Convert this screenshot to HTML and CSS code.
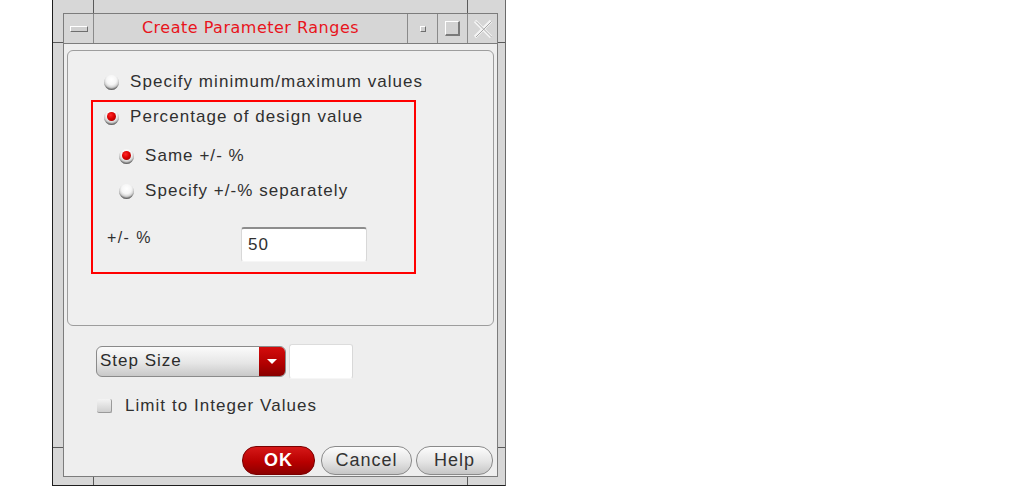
FILE: index.html
```html
<!DOCTYPE html>
<html>
<head>
<meta charset="utf-8">
<link rel="stylesheet" href="styles.css">
</head>
<body>
<div class="window">
  <span class="tick tick-top-l"></span>
  <span class="tick tick-top-r"></span>
  <span class="tick tick-bot-l"></span>
  <span class="tick tick-bot-r"></span>
  <span class="tick tick-side-lt"></span>
  <span class="tick tick-side-rt"></span>
  <span class="tick tick-side-lb"></span>
  <span class="tick tick-side-rb"></span>
  <div class="inner">
    <div class="titlebar">
      <div class="tb-btn tb-menu"><span class="menu-bar"></span></div>
      <div class="title">Create Parameter Ranges</div>
      <div class="tb-btn tb-min"><span class="min-dot"></span></div>
      <div class="tb-btn tb-max"><span class="max-box"></span></div>
      <div class="tb-btn tb-close">
        <svg width="22" height="20" viewBox="0 0 22 20">
          <path d="M3 2 L19 18 M19 2 L3 18" stroke="#f4f4f4" stroke-width="3.2" fill="none"/>
          <path d="M4 2.5 L19.5 18 M19.5 2.5 L4 18" stroke="#a8a8a8" stroke-width="1" fill="none"/>
        </svg>
      </div>
    </div>
    <div class="content">
      <div class="group">
        <div class="opt opt-top"><span class="radio"></span><span class="lbl">Specify minimum/maximum values</span></div>
        <div class="redbox">
          <div class="opt opt-pct"><span class="radio on"></span><span class="lbl">Percentage of design value</span></div>
          <div class="opt opt-sub opt-same"><span class="radio on"></span><span class="lbl">Same +/- %</span></div>
          <div class="opt opt-sub opt-sep"><span class="radio"></span><span class="lbl">Specify +/-% separately</span></div>
          <div class="pct-row">
            <span class="pct-label">+/- %</span>
            <div class="field field-pct">50</div>
          </div>
        </div>
      </div>
      <div class="step-row">
        <div class="combo">
          <span class="combo-text">Step Size</span>
          <span class="combo-arrow"></span>
        </div>
        <div class="field field-step"></div>
      </div>
      <div class="check-row">
        <span class="checkbox"></span><span class="lbl">Limit to Integer Values</span>
      </div>
      <div class="buttons">
        <div class="btn btn-ok">OK</div>
        <div class="btn btn-cancel">Cancel</div>
        <div class="btn btn-help">Help</div>
      </div>
    </div>
  </div>
</div>
</body>
</html>
```
FILE: styles.css
```css
html, body {
  margin: 0;
  padding: 0;
  background: #ffffff;
}
body {
  font-family: "Liberation Sans", Arial, sans-serif;
  color: #2e2e2e;
}
.window {
  position: relative;
  margin-left: 52px;
  width: 454px;
  height: 486px;
  box-sizing: border-box;
  border-left: 1px solid #1e1e1e;
  border-right: 1px solid #6a6a6a;
  border-bottom: 1px solid #1e1e1e;
  background: #d7d7d7;
  padding: 13px 7px 8px 10px;
}
.tick {
  position: absolute;
  background: #5a5a5a;
}
.tick-top-l { left: 40px; top: 0; width: 1px; height: 13px; }
.tick-top-r { left: 414px; top: 0; width: 1px; height: 13px; }
.tick-bot-l { left: 40px; bottom: 0; width: 1px; height: 8px; }
.tick-bot-r { left: 414px; bottom: 0; width: 1px; height: 8px; }
.tick-side-lt { left: 0; top: 42px; width: 10px; height: 1px; }
.tick-side-rt { right: 0; top: 42px; width: 7px; height: 1px; }
.tick-side-lb { left: 0; top: 447px; width: 10px; height: 1px; }
.tick-side-rb { right: 0; top: 447px; width: 7px; height: 1px; }

.inner {
  height: 100%;
  display: flex;
  flex-direction: column;
  border: 1px solid #7c7c7c;
  box-sizing: border-box;
}
.titlebar {
  height: 29px;
  display: flex;
  border-bottom: 1px solid #7c7c7c;
  background: #d6d6d6;
  flex: none;
}
.tb-btn {
  width: 29px;
  display: flex;
  align-items: center;
  justify-content: center;
}
.tb-menu { border-right: 1px solid #8a8a8a; }
.tb-min, .tb-max, .tb-close { border-left: 1px solid #8a8a8a; }
.menu-bar {
  width: 16px;
  height: 4px;
  border-top: 1px solid #ffffff;
  border-left: 1px solid #ffffff;
  border-right: 1px solid #6e6e6e;
  border-bottom: 1px solid #6e6e6e;
  background: #d0d0d0;
}
.min-dot {
  width: 4px;
  height: 4px;
  border-top: 1px solid #ffffff;
  border-left: 1px solid #ffffff;
  border-right: 1px solid #6e6e6e;
  border-bottom: 1px solid #6e6e6e;
  background: #cfcfcf;
}
.max-box {
  width: 12px;
  height: 12px;
  border-top: 1px solid #ffffff;
  border-left: 1px solid #ffffff;
  border-right: 2px solid #7a7a7a;
  border-bottom: 2px solid #7a7a7a;
  background: #d2d2d2;
}
.title {
  flex: 1;
  text-align: center;
  color: #e8141c;
  font-family: "DejaVu Sans", sans-serif;
  font-size: 16px;
  line-height: 28px;
  letter-spacing: 0.5px;
}

.content {
  flex: 1;
  background: #eeeeee;
  padding: 6px 0 0 3px;
  display: flex;
  flex-direction: column;
}
.group {
  width: 427px;
  height: 276px;
  box-sizing: border-box;
  border: 1px solid #9d9d9d;
  border-radius: 6px;
  padding: 20px 0 0 23px;
  background: #efefef;
}
.opt {
  display: flex;
  align-items: center;
  height: 22px;
  font-size: 17px;
  letter-spacing: 1.05px;
  color: #303030;
}
.opt-top { padding-left: 13px; }
.lbl { margin-left: 11px; }
.radio {
  width: 15px;
  height: 15px;
  border-radius: 50%;
  flex: none;
  background: radial-gradient(circle at 50% 32%, #ffffff 0, #f6f6f6 38%, #d4d4d4 62%, #8c8c8c 85%, #5a5a5a 100%);
  box-shadow: inset 0 -2px 2px -1px #555555;
  position: relative;
}
.radio.on::after {
  content: "";
  position: absolute;
  left: 3px;
  top: 2px;
  width: 9px;
  height: 9px;
  border-radius: 50%;
  background: radial-gradient(circle at 40% 35%, #ff2a2a 0, #dc0000 45%, #8a0000 100%);
}
.redbox {
  margin-top: 7px;
  width: 325px;
  height: 174px;
  box-sizing: border-box;
  border: 2px solid #ff0000;
  padding: 4px 0 0 11px;
}
.opt-sub { padding-left: 15px; }
.opt-same { margin-top: 17px; }
.opt-sep { margin-top: 13px; }
.pct-row {
  display: flex;
  margin-top: 25px;
}
.pct-label {
  width: 134px;
  padding-left: 3px;
  padding-top: 2px;
  font-size: 16px;
  letter-spacing: 1.4px;
  color: #303030;
}
.field {
  background: #ffffff;
  box-sizing: border-box;
  border-top: 2px solid #8d8d8d;
  border-left: 1px solid #d8d8d8;
  border-right: 1px solid #d8d8d8;
  border-bottom: 1px solid #f6f6f6;
  border-radius: 3px;
}
.field-pct {
  width: 126px;
  height: 35px;
  font-size: 17px;
  letter-spacing: 1px;
  padding: 6px 0 0 6px;
  color: #303030;
}

.step-row {
  display: flex;
  align-items: center;
  margin-top: 18px;
  padding-left: 29px;
}
.combo {
  width: 190px;
  height: 31px;
  box-sizing: border-box;
  border: 1px solid #8a8a8a;
  border-radius: 6px;
  background: linear-gradient(#fbfbfb, #e6e6e6 55%, #c8c8c8);
  display: flex;
  overflow: hidden;
}
.combo-text {
  flex: 1;
  font-size: 17px;
  letter-spacing: 1px;
  line-height: 28px;
  padding-left: 3px;
  color: #2b2b2b;
}
.combo-arrow {
  width: 26px;
  background: linear-gradient(#d40c0c, #b00000 60%, #880000);
  position: relative;
}
.combo-arrow::after {
  content: "";
  position: absolute;
  left: 8px;
  top: 12px;
  border-left: 5px solid transparent;
  border-right: 5px solid transparent;
  border-top: 5px solid #ffffff;
}
.field-step {
  margin-left: 3px;
  width: 64px;
  height: 35px;
  border-top: 1px solid #dcdcdc;
  border-left: 1px solid #dcdcdc;
}
.check-row {
  display: flex;
  align-items: center;
  margin-top: 17px;
  padding-left: 30px;
  font-size: 17px;
  letter-spacing: 1.05px;
  color: #303030;
}
.check-row .lbl { margin-left: 13px; }
.checkbox {
  width: 15px;
  height: 14px;
  box-sizing: border-box;
  border-radius: 2px;
  background: linear-gradient(#f4f4f4, #cfcfcf);
  border-right: 1px solid #9a9a9a;
  border-bottom: 1px solid #9a9a9a;
}
.buttons {
  display: flex;
  justify-content: flex-end;
  margin-top: 30px;
  padding-right: 4px;
}
.btn {
  height: 29px;
  box-sizing: border-box;
  border-radius: 14px;
  display: flex;
  align-items: center;
  justify-content: center;
  font-size: 18px;
  letter-spacing: 1px;
  margin-left: 4px;
}
.btn-ok {
  width: 73px;
  color: #ffffff;
  font-weight: bold;
  background: linear-gradient(#d61818, #b80000 55%, #8c0000);
  border: 1px solid #7a0000;
  margin-right: 2px;
}
.btn-cancel {
  width: 91px;
  color: #333333;
  background: linear-gradient(#fcfcfc, #e4e4e4 55%, #c6c6c6);
  border: 1px solid #8a8a8a;
}
.btn-help {
  width: 77px;
  color: #333333;
  background: linear-gradient(#fcfcfc, #e4e4e4 55%, #c6c6c6);
  border: 1px solid #8a8a8a;
}
```
